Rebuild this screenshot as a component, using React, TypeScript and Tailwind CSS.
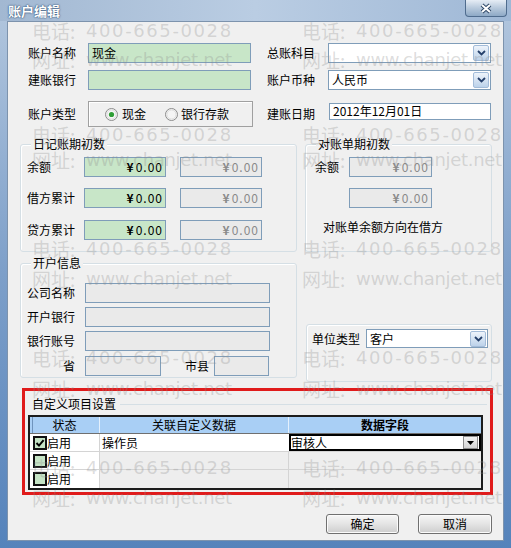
import React from 'react';

// watermark rows, measured from the reference (top of the glyph box)
const WATERMARKS = [
  { top: 22, kind: 'tel' },
  { top: 51, kind: 'web' },
  { top: 126, kind: 'tel' },
  { top: 151, kind: 'web' },
  { top: 240, kind: 'tel' },
  { top: 270, kind: 'web' },
  { top: 349, kind: 'tel' },
  { top: 380, kind: 'web' },
  { top: 459, kind: 'tel' },
  { top: 489, kind: 'web' },
];

const Watermark: React.FC = () => (
  <div className="pointer-events-none absolute inset-0 overflow-hidden font-['DejaVu_Sans','Noto_Sans_CJK_SC',sans-serif] text-[18px] leading-[18px] text-[#8c8c8c4d]">
    {WATERMARKS.flatMap((m, i) =>
      [32, 302].map((left) => (
        <div key={`${i}-${left}`} className="absolute flex items-end whitespace-nowrap" style={{ top: m.top, left }}>
          <span className="w-[54px] font-['Noto_Sans_CJK_SC',sans-serif] text-[19px] leading-[18px]">
            {m.kind === 'tel' ? '电话:' : '网址:'}
          </span>
          {m.kind === 'tel' ? (
            <span className="tracking-[1.6px]">400-665-0028</span>
          ) : (
            <span className="tracking-[-0.3px]">www.chanjet.net</span>
          )}
        </div>
      ))
    )}
  </div>
);

const ComboArrow: React.FC = () => (
  <span className="flex h-[16px] w-[16px] shrink-0 items-center justify-center rounded-[2px] border border-[#a3bcd9] bg-linear-to-b from-[#eef4fb] to-[#bcd2ea]">
    <svg width="9" height="6" viewBox="0 0 9 6">
      <path d="M1 1 L4.5 4.5 L8 1" fill="none" stroke="#25406b" strokeWidth="1.8" />
    </svg>
  </span>
);

const Combo: React.FC<{ className: string; text?: string }> = ({ className, text }) => (
  <div className={`flex items-center justify-between border border-[#7f9db9] bg-white pl-[3px] pr-px ${className}`}>
    <span>{text}</span>
    <ComboArrow />
  </div>
);

const Money: React.FC<{ green?: boolean; className?: string }> = ({ green, className = '' }) => (
  <div
    className={`flex h-[20px] items-center justify-end border border-[#7f9db9] pr-[2px] ${
      green ? 'bg-[#c8e6c8] text-black' : 'bg-[#eaeaea] text-[#8a8a8a]'
    } ${className}`}
  >
    <span className="mr-[2px] font-bold">¥</span>
    <span className="tracking-[1px]">0.00</span>
  </div>
);

const Radio: React.FC<{ checked?: boolean }> = ({ checked }) => (
  <svg width="13" height="13" viewBox="0 0 13 13">
    <circle cx="6.5" cy="6.5" r="6" fill="#f5f5f5" stroke="#8c8c8c" />
    <circle cx="6.5" cy="6.5" r="4.6" fill="none" stroke="#dcdcdc" />
    {checked && <circle cx="6.5" cy="6.5" r="2.6" fill="#2f9e36" />}
  </svg>
);

const Check: React.FC<{ checked?: boolean }> = ({ checked }) => (
  <svg width="14" height="14" viewBox="0 0 14 14">
    <rect x="1" y="1" width="12" height="12" fill="#c5e4c5" stroke="#111" strokeWidth="2" />
    {checked && <path d="M3.5 7 L6 9.6 L10.6 4.2" fill="none" stroke="#000" strokeWidth="2" />}
  </svg>
);

const Group: React.FC<{ title?: string; className: string; children?: React.ReactNode }> = ({
  title,
  className,
  children,
}) => (
  <div className={`relative rounded-[3px] border border-[#d5dfe5] shadow-[inset_1px_1px_0_#ffffff] ${className}`}>
    {title && (
      <span className="absolute left-[10px] top-[-9px] bg-[#f0f0f0] px-[2px] leading-[16px]">{title}</span>
    )}
    {children}
  </div>
);

const Button: React.FC<{ label: string; className: string }> = ({ label, className }) => (
  <button
    className={`flex h-[20px] items-center justify-center rounded-[3px] border border-[#707070] bg-linear-to-b from-[#f6f6f6] via-[#e4e4e4] to-[#cdcdcd] shadow-[inset_0_0_0_1px_#fbfbfb] ${className}`}
  >
    {label}
  </button>
);

const App: React.FC = () => {
  return (
    <div className="relative h-[548px] w-[511px] overflow-hidden bg-linear-to-b from-[#b3c7de] via-[#7d9fc9] to-[#5583bb] font-['Noto_Sans_CJK_SC','Noto_Sans',sans-serif] text-[12px] leading-[14px] text-black">
      {/* Title bar */}
      <div className="flex h-[21px] items-start bg-linear-to-r from-[#a2b8d2] via-[#bacde3] to-[#9fb8d6]">
        <span className="ml-[8px] mt-[3px] text-[13px] font-bold leading-[16px] text-white [text-shadow:0_0_2px_#2c4c74,0_0_1px_#2c4c74]">
          账户编辑
        </span>
        <div className="ml-auto mr-[4px] flex h-[17px] w-[42px] items-center justify-center rounded-b-[4px] border border-t-0 border-[#4f6c8e] bg-linear-to-b from-[#e6edf5] via-[#b7c9dc] to-[#8ea9c6]">
          <svg width="14" height="11" viewBox="0 0 14 11">
            <path d="M3 2 L11 9 M11 2 L3 9" stroke="#2f4868" strokeWidth="4" />
            <path d="M3 2 L11 9 M11 2 L3 9" stroke="#ffffff" strokeWidth="2" />
          </svg>
        </div>
      </div>

      {/* Client area */}
      <div className="mx-[7px] flex h-[520px] flex-col border border-[#7d93ad] bg-[#f0f0f0]">
        {/* Row 1 */}
        <div className="mt-[21px] flex h-[20px] items-center">
          <span className="ml-[20px] w-[60px]">账户名称</span>
          <div className="flex h-[20px] w-[163px] items-center border border-[#7f9db9] bg-[#c8e6c8] pl-[3px]">现金</div>
          <span className="ml-[16px] w-[61px]">总账科目</span>
          <Combo className="h-[20px] w-[163px]" />
        </div>

        {/* Row 2 */}
        <div className="mt-[7px] flex h-[20px] items-center">
          <span className="ml-[20px] w-[60px]">建账银行</span>
          <div className="h-[20px] w-[163px] border border-[#7f9db9] bg-[#c8e6c8]" />
          <span className="ml-[16px] w-[61px]">账户币种</span>
          <Combo className="h-[20px] w-[163px]" text="人民币" />
        </div>

        {/* Row 3 */}
        <div className="mt-[11px] flex h-[26px] items-center">
          <span className="ml-[20px] w-[60px]">账户类型</span>
          <div className="flex h-[26px] w-[165px] items-center border border-[#a0a0a0] pl-[16px] shadow-[inset_1px_1px_0_#ffffff]">
            <Radio checked />
            <span className="ml-[4px]">现金</span>
            <span className="ml-[19px] flex">
              <Radio />
            </span>
            <span className="ml-[3px]">银行存款</span>
          </div>
          <span className="ml-[14px] w-[62px]">建账日期</span>
          <div className="mb-[6px] flex h-[17px] w-[162px] items-center border border-[#7f9db9] bg-white pl-[3px]">
            2012年12月01日
          </div>
        </div>

        {/* Opening balances */}
        <div className="mt-[17px] flex items-start">
          <Group title="日记账期初数" className="ml-[12px] h-[108px] w-[277px]">
            <div className="flex flex-col pl-[6px] pt-[12px]">
              <div className="flex h-[20px] items-center">
                <span className="w-[57px]">余额</span>
                <Money green className="w-[82px]" />
                <Money className="ml-[14px] w-[82px]" />
              </div>
              <div className="mt-[11px] flex h-[20px] items-center">
                <span className="w-[57px]">借方累计</span>
                <Money green className="w-[82px]" />
                <Money className="ml-[14px] w-[82px]" />
              </div>
              <div className="mt-[12px] flex h-[20px] items-center">
                <span className="w-[57px]">贷方累计</span>
                <Money green className="w-[82px]" />
                <Money className="ml-[14px] w-[82px]" />
              </div>
            </div>
          </Group>

          <Group title="对账单期初数" className="ml-[8px] h-[108px] w-[187px]">
            <div className="flex flex-col pt-[12px]">
              <div className="flex h-[20px] items-center pl-[9px]">
                <span className="w-[34px]">余额</span>
                <Money className="w-[83px]" />
              </div>
              <div className="mt-[11px] flex h-[20px] items-center pl-[43px]">
                <Money className="w-[83px]" />
              </div>
              <div className="mt-[12px] flex h-[14px] items-center pl-[17px]">对账单余额方向在借方</div>
            </div>
          </Group>
        </div>

        {/* Bank info */}
        <div className="mt-[11px] flex items-start">
          <Group title="开户信息" className="ml-[12px] h-[115px] w-[277px]">
            <div className="flex flex-col pl-[6px] pt-[19px]">
              <div className="flex h-[20px] items-center">
                <span className="w-[58px]">公司名称</span>
                <div className="h-[20px] w-[185px] border border-[#7f9db9] bg-[#eaeaea]" />
              </div>
              <div className="mt-[4px] flex h-[20px] items-center">
                <span className="w-[58px]">开户银行</span>
                <div className="h-[20px] w-[185px] border border-[#7f9db9] bg-[#eaeaea]" />
              </div>
              <div className="mt-[4px] flex h-[20px] items-center">
                <span className="w-[58px]">银行账号</span>
                <div className="h-[20px] w-[185px] border border-[#7f9db9] bg-[#eaeaea]" />
              </div>
              <div className="mt-[5px] flex h-[20px] items-center">
                <span className="w-[58px] pr-[10px] text-right">省</span>
                <div className="h-[20px] w-[76px] border border-[#7f9db9] bg-[#eaeaea]" />
                <span className="ml-[24px] w-[29px]">市县</span>
                <div className="h-[20px] w-[55px] border border-[#7f9db9] bg-[#eaeaea]" />
              </div>
            </div>
          </Group>

          <Group className="ml-[9px] mt-[61px] h-[58px] w-[186px]">
            <div className="flex items-center pl-[5px] pt-[4px]">
              <span className="w-[54px]">单位类型</span>
              <Combo className="h-[19px] w-[122px]" text="客户" />
            </div>
          </Group>
        </div>

        {/* Custom items (highlighted) */}
        <div className="ml-[14px] mt-[6px] flex h-[107px] w-[471px] flex-col border-[3px] border-[#e01b1b]">
          <div className="ml-[7px] mt-[5px] flex h-[16px] items-center">
            <span>自定义项目设置</span>
            <span className="ml-[4px] mr-[3px] h-px flex-1 bg-[#d5dfe5]" />
          </div>
          <div className="ml-[3px] mt-[3px] w-[455px] border-2 border-[#1c1c1c] bg-white">
            <div className="flex h-[17px] border-b border-[#6f6f6f] bg-[#a9cff5]">
              <div className="relative flex w-[70px] items-center justify-center border-r border-[#e4f0fc]">
                <span className="absolute left-[2px] top-0 h-full w-px bg-[#6f94bd]" />
                状态
              </div>
              <div className="flex w-[189px] items-center justify-center border-r border-[#e4f0fc]">关联自定义数据</div>
              <div className="flex flex-1 items-center justify-center font-bold">数据字段</div>
            </div>

            <div className="flex h-[18px] border-b border-[#d4d4d4]">
              <div className="flex w-[70px] items-center border-r border-[#d4d4d4] pl-[3px]">
                <Check checked />
                <span>启用</span>
              </div>
              <div className="flex w-[189px] items-center pl-[2px]">操作员</div>
              <div className="flex flex-1 items-center justify-between border-2 border-black pr-px">
                <span>审核人</span>
                <span className="flex h-[13px] w-[15px] items-center justify-center border border-[#8d8d8d] bg-linear-to-b from-[#f2f2f2] to-[#d4d4d4]">
                  <svg width="7" height="4" viewBox="0 0 7 4">
                    <path d="M0 0 H7 L3.5 4 Z" fill="#000" />
                  </svg>
                </span>
              </div>
            </div>

            <div className="flex h-[18px] border-b border-[#d4d4d4]">
              <div className="flex w-[70px] items-center border-r border-[#d4d4d4] pl-[3px]">
                <Check />
                <span>启用</span>
              </div>
              <div className="w-[189px] border-r border-[#d4d4d4] bg-[#eeeeee]" />
              <div className="flex-1 bg-[#eeeeee]" />
            </div>

            <div className="flex h-[18px]">
              <div className="flex w-[70px] items-center border-r border-[#d4d4d4] pl-[3px]">
                <Check />
                <span>启用</span>
              </div>
              <div className="w-[189px] border-r border-[#d4d4d4] bg-[#eeeeee]" />
              <div className="flex-1 bg-[#eeeeee]" />
            </div>
          </div>
        </div>

        {/* Buttons */}
        <div className="mt-[19px] flex justify-end gap-[19px] pr-[11px]">
          <Button label="确定" className="w-[73px]" />
          <Button label="取消" className="w-[74px]" />
        </div>
      </div>

      <Watermark />
    </div>
  );
};

export default App;
